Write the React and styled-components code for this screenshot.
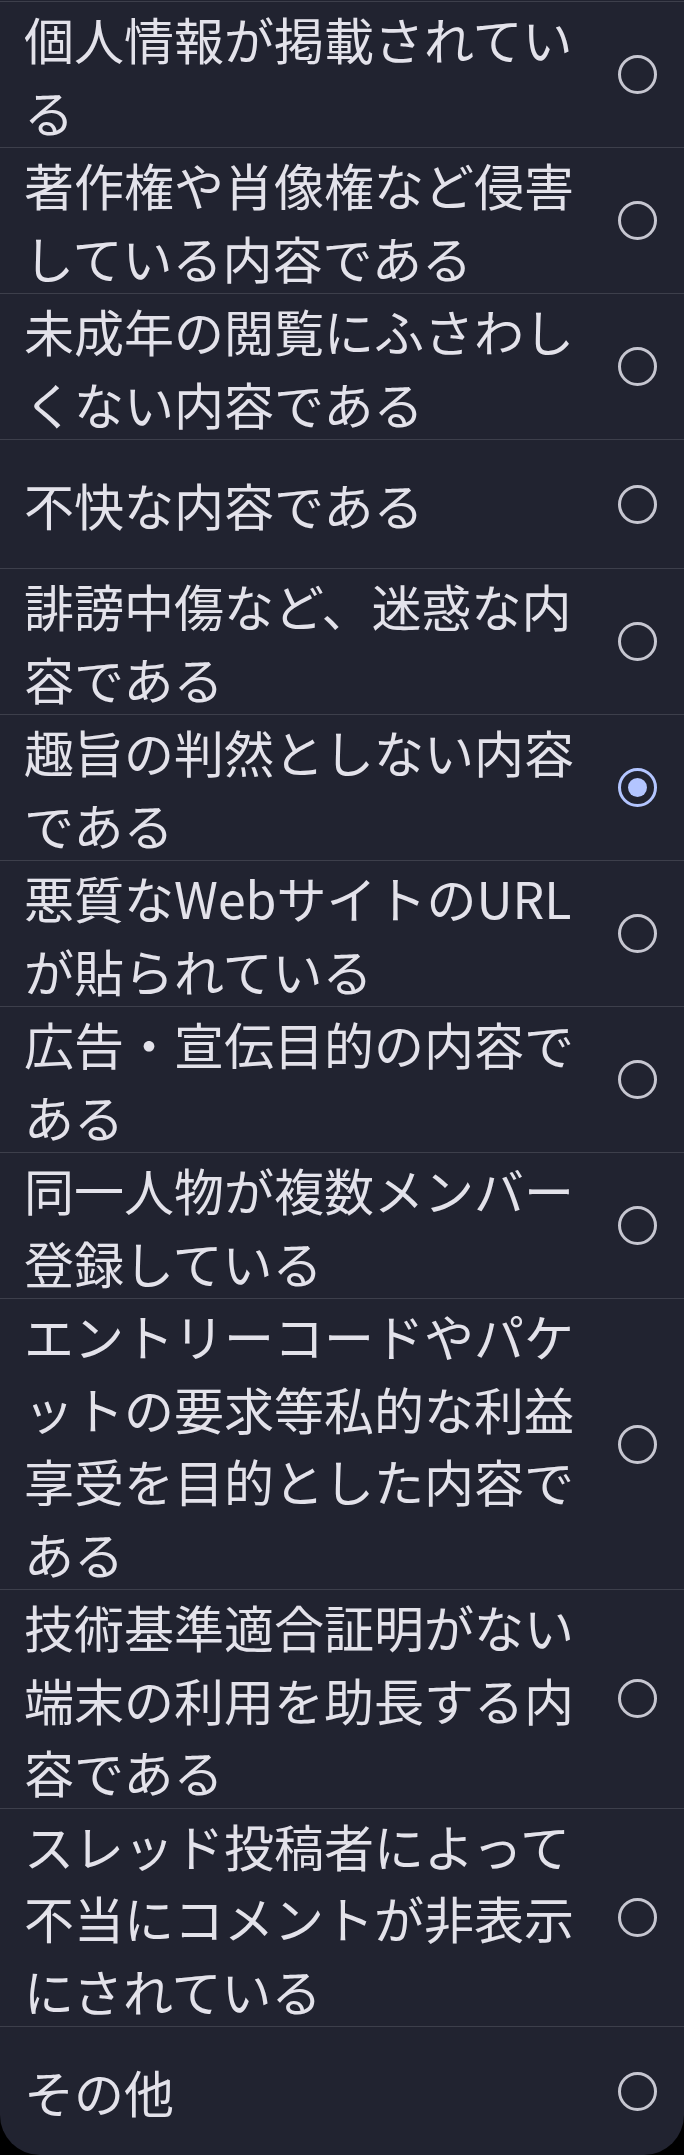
import React, { useState } from "react";
import styled, { createGlobalStyle } from "styled-components";

/* Page */
const GlobalStyle = createGlobalStyle`
  html, body {
    margin: 0;
    padding: 0;
    background: #000000;
  }
  body {
    font-family: "Noto Sans CJK JP", "Noto Sans", sans-serif;
  }
`;

const Sheet = styled.div`
  background: #212330;
  border-radius: 0 0 40px 40px;
  padding-top: 1px;
  overflow: hidden;
`;

const Row = styled.label`
  display: flex;
  align-items: center;
  gap: 28px;
  min-height: 128px;
  padding: 0 27px 0 24px;
  border-top: 1px solid #3d3f4b;
  cursor: pointer;
`;

const Text = styled.span`
  flex: 1;
  font-size: 50px;
  line-height: 72.5px;
  font-weight: 400;
  color: #e3e2ea;
`;

const Radio = styled.span`
  position: relative;
  flex: none;
  width: 39px;
  height: 39px;
  box-sizing: border-box;
  border-radius: 50%;
  border: 3.4px solid ${(p) => (p.$checked ? "#b3c5ff" : "#c6c6d0")};

  &::after {
    content: "";
    position: absolute;
    left: 50%;
    top: 50%;
    width: 19px;
    height: 19px;
    margin: -9.5px 0 0 -9.5px;
    border-radius: 50%;
    background: #b3c5ff;
    display: ${(p) => (p.$checked ? "block" : "none")};
  }
`;

const REASONS = [
  "個人情報が掲載されている",
  "著作権や肖像権など侵害している内容である",
  "未成年の閲覧にふさわしくない内容である",
  "不快な内容である",
  "誹謗中傷など、迷惑な内容である",
  "趣旨の判然としない内容である",
  "悪質なWebサイトのURLが貼られている",
  "広告・宣伝目的の内容である",
  "同一人物が複数メンバー登録している",
  "エントリーコードやパケットの要求等私的な利益享受を目的とした内容である",
  "技術基準適合証明がない端末の利用を助長する内容である",
  "スレッド投稿者によって不当にコメントが非表示にされている",
  "その他",
];

const App = () => {
  const [selected, setSelected] = useState(5);

  return (
    <>
      <GlobalStyle />
      <Sheet>
        {REASONS.map((reason, i) => (
          <Row key={reason} onClick={() => setSelected(i)}>
            <Text>{reason}</Text>
            <Radio $checked={selected === i} />
          </Row>
        ))}
      </Sheet>
    </>
  );
};

export default App;
